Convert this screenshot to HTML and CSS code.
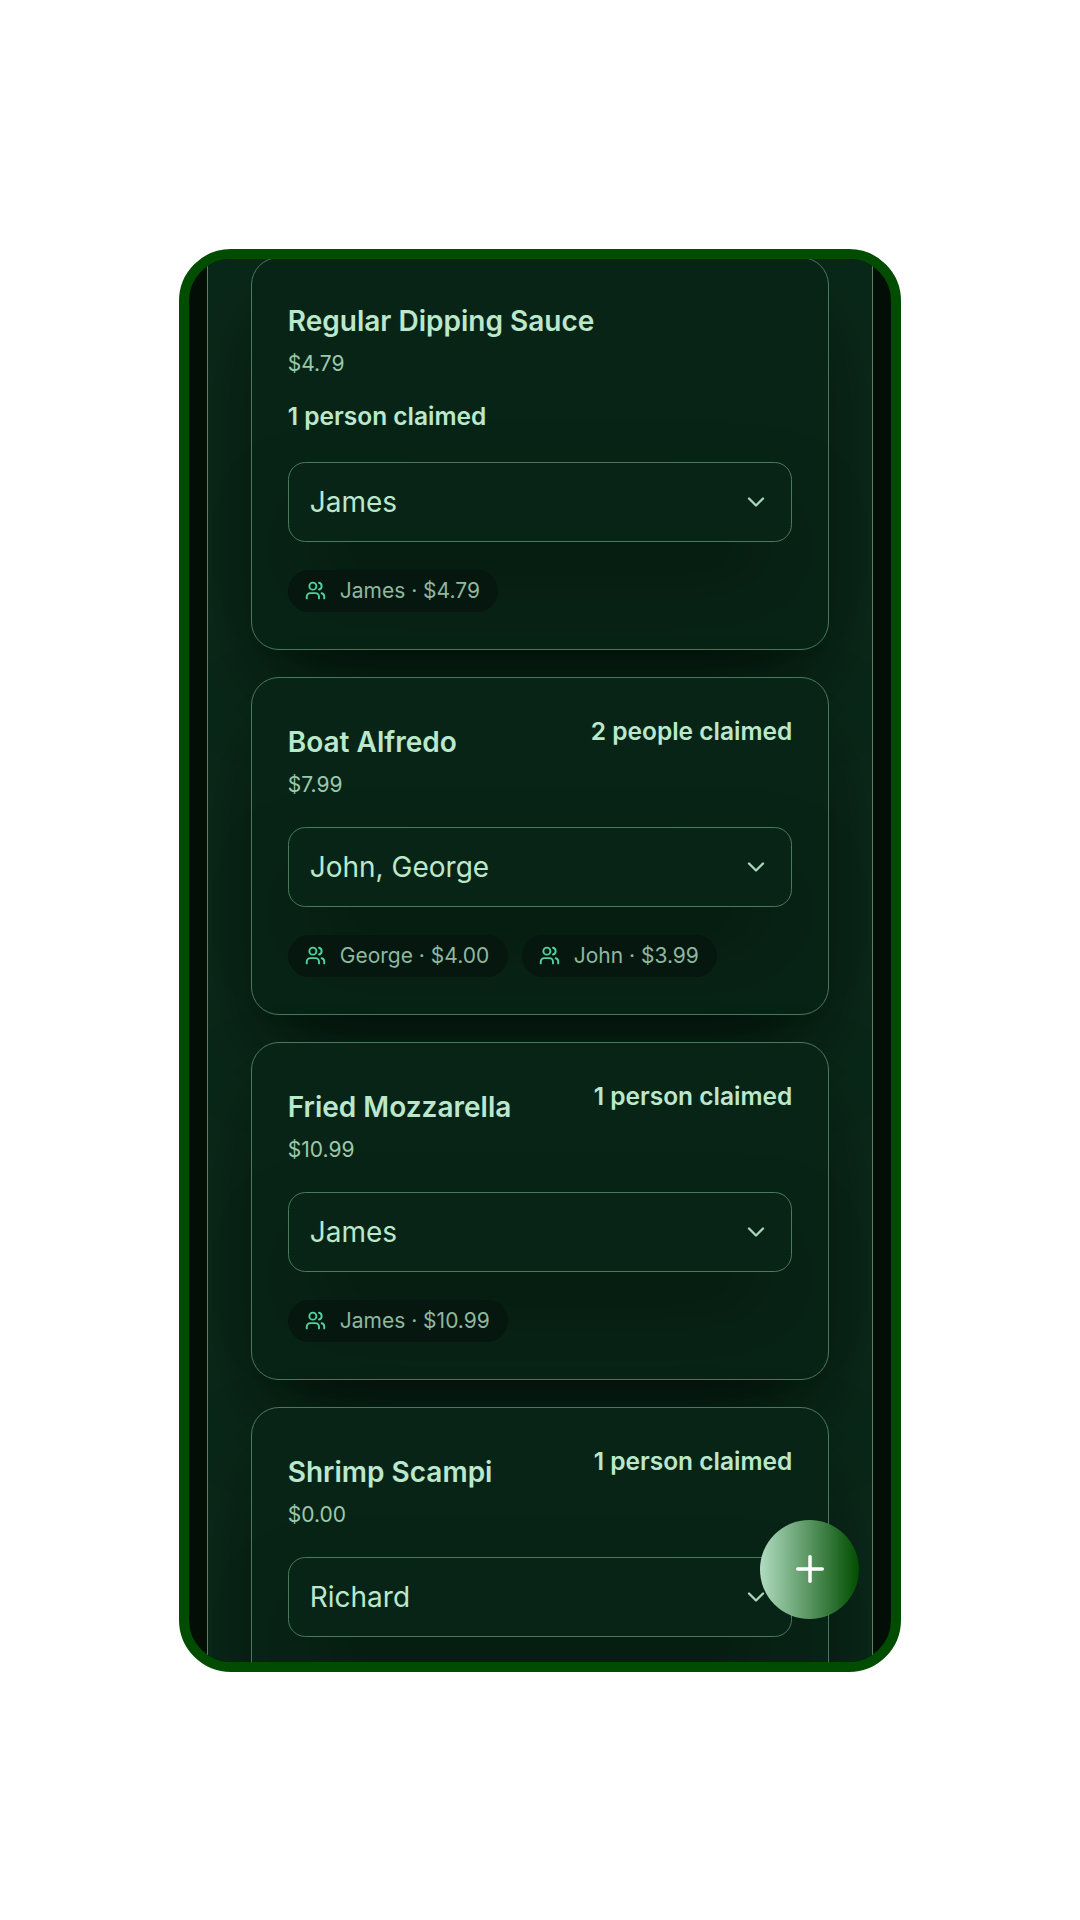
FILE: index.html
```html
<!DOCTYPE html>
<html lang="en">
<head>
<meta charset="utf-8">
<title>Claim items</title>
<link rel="stylesheet" href="styles.css">
</head>
<body>
<svg class="sprite" width="0" height="0" aria-hidden="true">
  <symbol id="users" viewBox="0 0 24 24"><path d="M16 21v-2a4 4 0 0 0-4-4H6a4 4 0 0 0-4 4v2"/><circle cx="9" cy="7" r="4"/><path d="M22 21v-2a4 4 0 0 0-3-3.87"/><path d="M16 3.13a4 4 0 0 1 0 7.75"/></symbol>
  <symbol id="chev" viewBox="0 0 24 24"><path d="m6 9 6 6 6-6"/></symbol>
</svg>
<main class="phone">
  <div class="column">
    <div class="list">
      <article class="card">
        <h3 class="title">Regular Dipping Sauce</h3>
        <p class="price">$4.79</p>
        <p class="claimed claimed-below">1 person claimed</p>
        <div class="select"><span>James</span><svg class="chevron"><use href="#chev"/></svg></div>
        <div class="chips">
          <span class="chip"><svg class="chip-icon"><use href="#users"/></svg>James · $4.79</span>
        </div>
      </article>
      <article class="card">
        <div class="head">
          <div><h3 class="title">Boat Alfredo</h3><p class="price">$7.99</p></div>
          <p class="claimed">2 people claimed</p>
        </div>
        <div class="select"><span>John, George</span><svg class="chevron"><use href="#chev"/></svg></div>
        <div class="chips">
          <span class="chip"><svg class="chip-icon"><use href="#users"/></svg>George · $4.00</span>
          <span class="chip"><svg class="chip-icon"><use href="#users"/></svg>John · $3.99</span>
        </div>
      </article>
      <article class="card">
        <div class="head">
          <div><h3 class="title">Fried Mozzarella</h3><p class="price">$10.99</p></div>
          <p class="claimed">1 person claimed</p>
        </div>
        <div class="select"><span>James</span><svg class="chevron"><use href="#chev"/></svg></div>
        <div class="chips">
          <span class="chip"><svg class="chip-icon"><use href="#users"/></svg>James · $10.99</span>
        </div>
      </article>
      <article class="card card-cut">
        <div class="head">
          <div><h3 class="title">Shrimp Scampi</h3><p class="price">$0.00</p></div>
          <p class="claimed">1 person claimed</p>
        </div>
        <div class="select"><span>Richard</span><svg class="chevron"><use href="#chev"/></svg></div>
      </article>
    </div>
  </div>
  <button class="fab" aria-label="Add"><svg viewBox="0 0 24 24"><path d="M5 12h14"/><path d="M12 5v14"/></svg></button>
</main>
</body>
</html>
```
FILE: styles.css
```css
* { box-sizing: border-box; }
html, body { margin: 0; height: 100%; }
body {
  background: #fff;
  display: flex;
  align-items: center;
  justify-content: center;
  font-family: Inter, "Liberation Sans", sans-serif;
}
.sprite { position: absolute; }
.phone {
  position: relative;
  width: 722px;
  height: 1423px;
  border: 10px solid #004d00;
  border-radius: 52px;
  background: #020e06;
  overflow: hidden;
  display: flex;
  justify-content: center;
}
.column {
  width: 666px;
  height: 100%;
  border-left: 1px solid #5a8069;
  border-right: 1px solid #5a8069;
  background: #0a2819;
  overflow: hidden;
  padding: 0 43px;
}
.list {
  display: flex;
  flex-direction: column;
  gap: 27.75px;
  margin-top: -2px;
}
.card {
  border: 1px solid #4a7a5e;
  border-radius: 28px;
  background: #082416;
  padding: 35.75px;
  box-shadow: 0 44px 88px -21px rgba(0, 0, 0, .65);
}
.card-cut { padding-bottom: 110px; }
.head { display: flex; justify-content: space-between; align-items: flex-start; }
.title {
  margin: 0;
  font-size: 28px;
  font-weight: 600;
  line-height: 56px;
  color: #bbe8cc;
}
.price {
  margin: 0;
  font-size: 21px;
  line-height: 29px;
  color: #9cc8ae;
}
.claimed {
  margin: 1px 0 0;
  font-size: 24.5px;
  font-weight: 600;
  line-height: 32px;
  color: #bbe8cc;
}
.claimed-below { margin: 21.5px 0 30.4px; }
.select {
  margin-top: 28px;
  height: 80px;
  border: 1px solid #4a7a5e;
  border-radius: 17.5px;
  background: #082416;
  padding: 0 21.75px 0 21px;
  display: flex;
  align-items: center;
  justify-content: space-between;
  font-size: 28px;
  color: #bbe8cc;
  box-shadow: 0 44px 88px -21px rgba(0, 0, 0, .5);
}
.chevron {
  width: 28px;
  height: 28px;
  fill: none;
  stroke: #a9d6ba;
  stroke-width: 2;
  stroke-linecap: round;
  stroke-linejoin: round;
}
.chips { margin: 27.75px 0 1px; display: flex; gap: 14px; }
.chip {
  height: 42px;
  padding: 0 18.5px 0 17.5px;
  border-radius: 21px;
  background: #05170e;
  display: flex;
  align-items: center;
  gap: 13.5px;
  font-size: 21px;
  color: #8fb8a0;
}
.chip-icon {
  width: 21px;
  height: 21px;
  fill: none;
  stroke: #4fd1a0;
  stroke-width: 2.2;
  stroke-linecap: round;
  stroke-linejoin: round;
}
.fab {
  position: absolute;
  right: 32px;
  bottom: 43px;
  width: 99px;
  height: 99px;
  padding: 0;
  border: none;
  border-radius: 50%;
  background: linear-gradient(90deg, #b0dcc0, #004d00);
  display: flex;
  align-items: center;
  justify-content: center;
}
.fab svg {
  width: 42px;
  height: 42px;
  fill: none;
  stroke: #fff;
  stroke-width: 2;
  stroke-linecap: round;
  stroke-linejoin: round;
}
```
